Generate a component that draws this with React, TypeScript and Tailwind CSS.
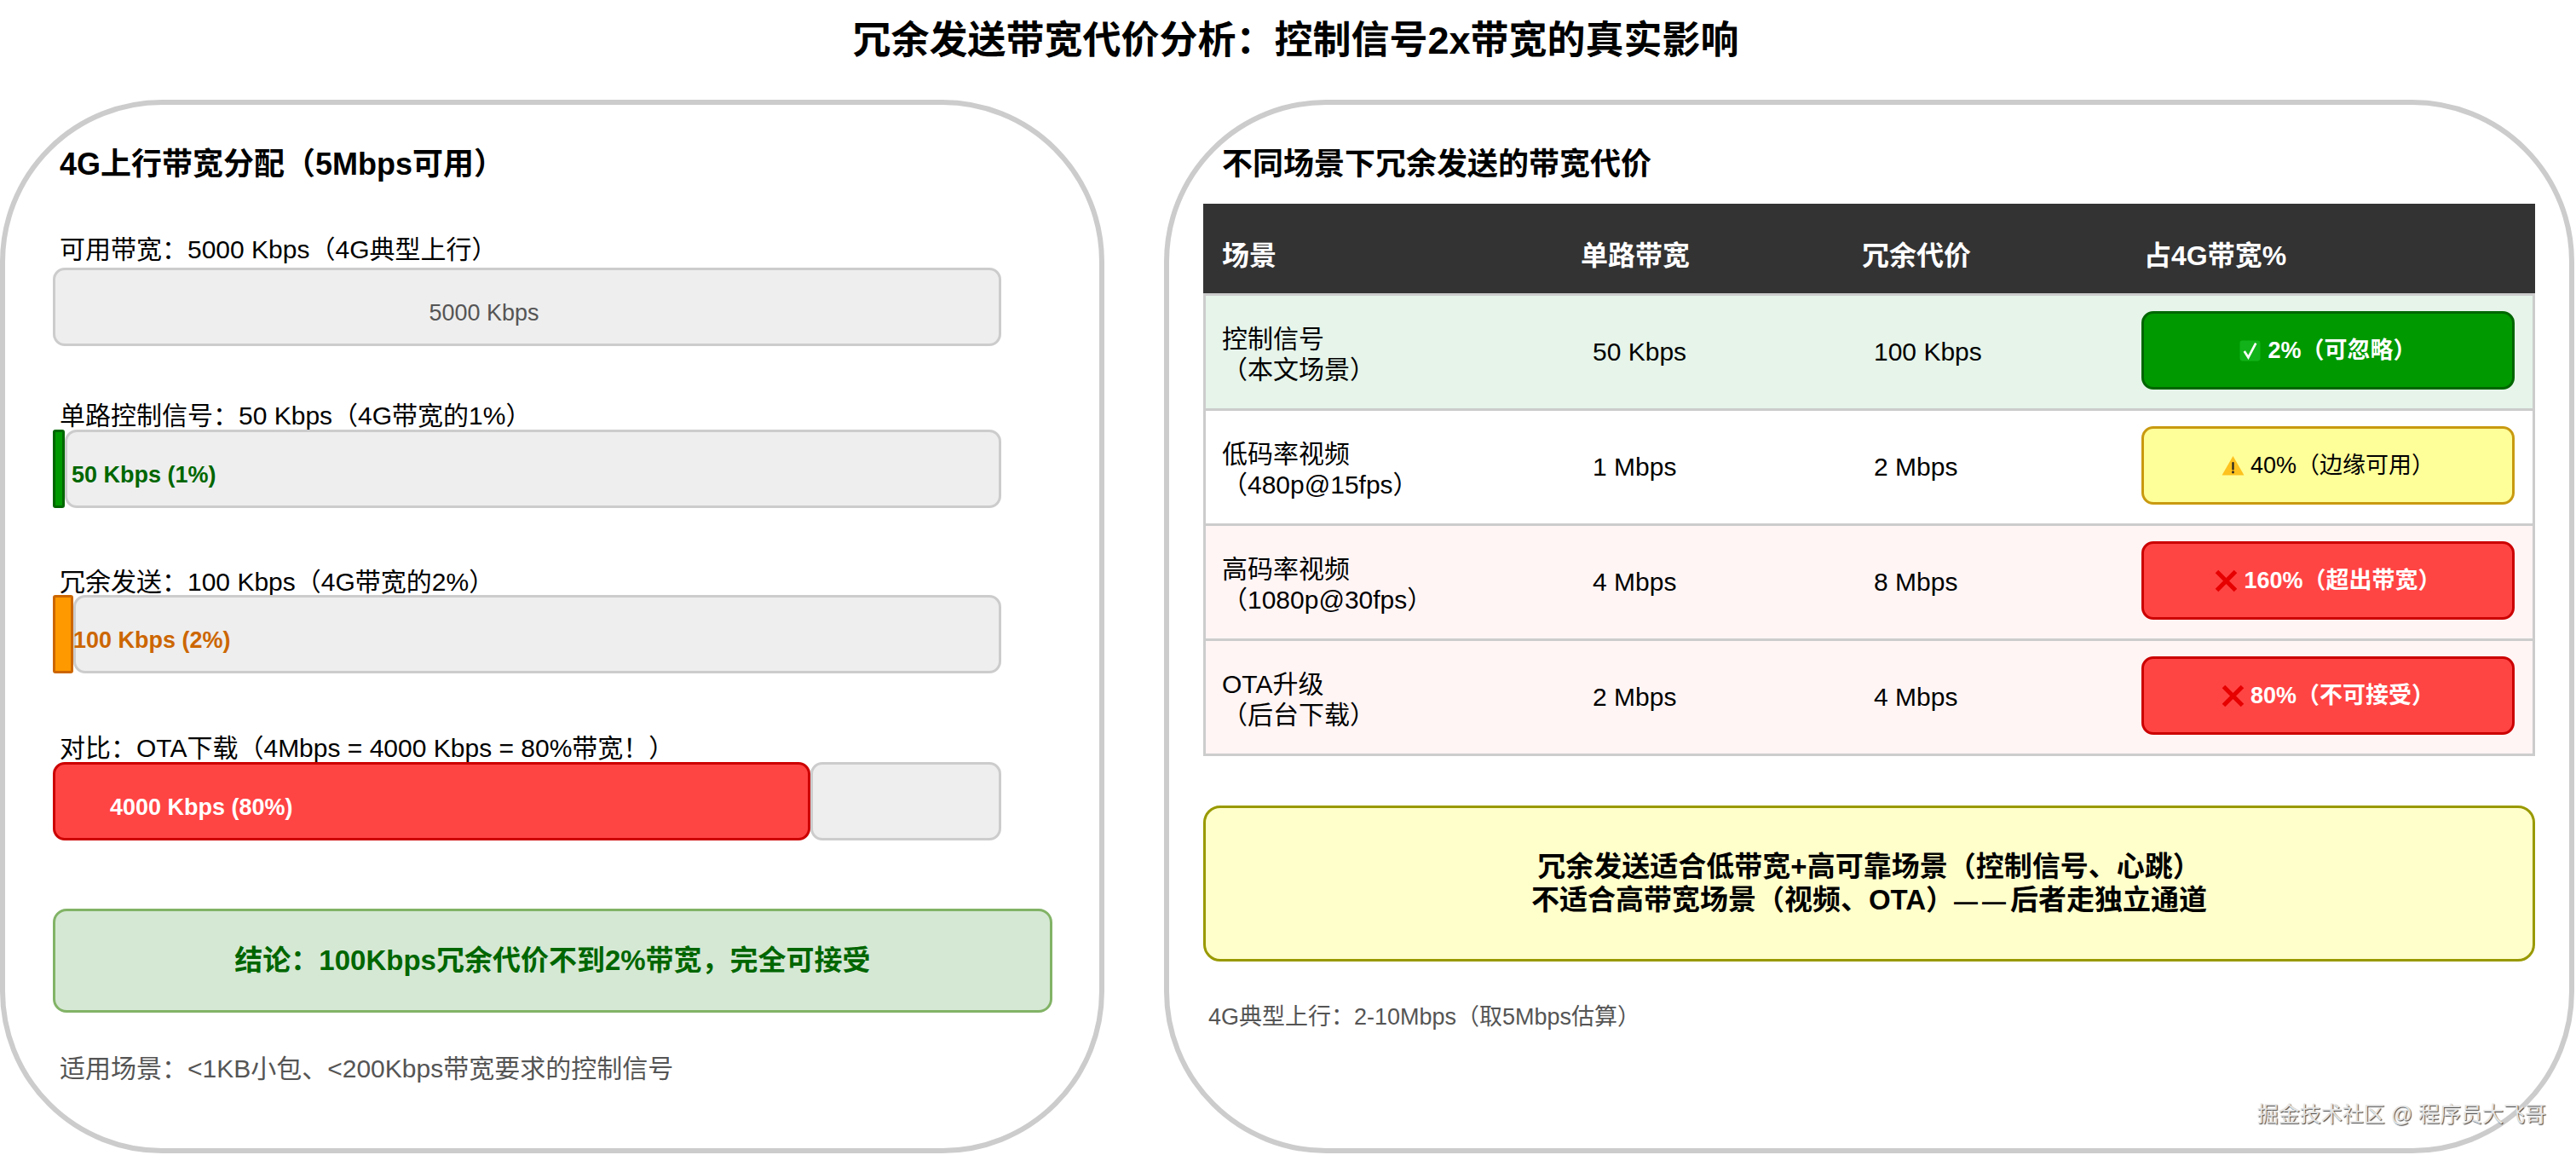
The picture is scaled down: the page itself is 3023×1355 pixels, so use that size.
import type { ReactNode } from "react";

const font = "font-['Liberation_Sans','Noto_Sans_CJK_SC',sans-serif]";
const rowCols = "grid grid-cols-[440px_330px_331px_1fr]";

function CheckIcon() {
  return (
    <svg width="25" height="25" viewBox="0 0 24 24" className="shrink-0">
      <rect x="0.5" y="0.5" width="23" height="23" rx="3" fill="#12b31a" />
      <path d="M5.5 12.5 L10 19.5 L18.5 3.5" fill="none" stroke="#fff" strokeWidth="2.6" />
    </svg>
  );
}

function WarnIcon() {
  return (
    <svg width="27" height="24" viewBox="0 0 27 24" className="shrink-0">
      <path d="M13.5 1 L26.5 23.5 L0.5 23.5 Z" fill="#fdc21f" />
      <rect x="12.4" y="8" width="2.2" height="9.5" rx="1" fill="#222" />
      <circle cx="13.5" cy="20" r="1.4" fill="#222" />
    </svg>
  );
}

function CrossIcon() {
  return (
    <svg width="27" height="27" viewBox="0 0 27 27" className="shrink-0">
      <path d="M2.5 2.5 L24.5 24.5 M24.5 2.5 L2.5 24.5" fill="none" stroke="#e60000" strokeWidth="5" />
    </svg>
  );
}

function Bar({ fill, children }: { fill?: ReactNode; children?: ReactNode }) {
  return (
    <div className="flex h-[92px] w-[1113px]">
      {fill}
      <div className="flex-1 flex items-center pt-[14px] rounded-[14px] border-[3px] border-[#ccc] bg-[#eee] text-[27px] leading-[32px]">
        {children}
      </div>
    </div>
  );
}

function Label({ children }: { children: ReactNode }) {
  return <div className="pl-[8px] pt-[1px] text-[30px] leading-[31px] text-black">{children}</div>;
}

const rows = [
  {
    name: "控制信号",
    sub: "（本文场景）",
    single: "50 Kbps",
    cost: "100 Kbps",
    tone: "bg-[#e6f4ea]",
    badge: "bg-[#009900] border-[#006600] text-white font-bold",
    icon: <CheckIcon />,
    text: "2%（可忽略）",
    gap: "gap-[8px]",
  },
  {
    name: "低码率视频",
    sub: "（480p@15fps）",
    single: "1 Mbps",
    cost: "2 Mbps",
    tone: "bg-white",
    badge: "bg-[#ffff99] border-[#c99a10] text-black",
    icon: <WarnIcon />,
    text: "40%（边缘可用）",
    gap: "gap-[7px]",
  },
  {
    name: "高码率视频",
    sub: "（1080p@30fps）",
    single: "4 Mbps",
    cost: "8 Mbps",
    tone: "bg-[#fff5f5]",
    badge: "bg-[#ff4444] border-[#cc0000] text-white font-bold",
    icon: <CrossIcon />,
    text: "160%（超出带宽）",
    gap: "gap-[7px]",
  },
  {
    name: "OTA升级",
    sub: "（后台下载）",
    single: "2 Mbps",
    cost: "4 Mbps",
    tone: "bg-[#fff5f5]",
    badge: "bg-[#ff4444] border-[#cc0000] text-white font-bold",
    icon: <CrossIcon />,
    text: "80%（不可接受）",
    gap: "gap-[7px]",
  },
];

export default function App() {
  return (
    <div className={`${font} relative w-[3023px] h-[1355px] bg-white text-black overflow-hidden`}>
      <h1 className="h-[117px] pt-[21px] pl-[18px] text-center text-[45px] leading-[54px] font-bold">
        冗余发送带宽代价分析：控制信号2x带宽的真实影响
      </h1>

      <div className="flex gap-[70px] pr-[2px]">
        {/* left panel */}
        <section className="w-[1296px] h-[1236px] shrink-0 rounded-[190px] border-[6px] border-[#ccc] pt-[50px] pl-[56px]">
          <h2 className="pl-[8px] text-[36px] leading-[40px] font-bold">4G上行带宽分配（5Mbps可用）</h2>

          <div className="mt-[63px]">
            <Label>可用带宽：5000 Kbps（4G典型上行）</Label>
            <div className="mt-[6px]">
              <Bar>
                <span className="w-full text-center pr-[101px] text-[#555]">5000 Kbps</span>
              </Bar>
            </div>
          </div>

          <div className="mt-[65px]">
            <Label>单路控制信号：50 Kbps（4G带宽的1%）</Label>
            <div className="mt-[1px]">
              <Bar fill={<div className="w-[14px] rounded-[3px] border-[3px] border-[#006600] bg-[#009900]" />}>
                <span className="pl-[5px] font-bold text-[#006600]">50 Kbps (1%)</span>
              </Bar>
            </div>
          </div>

          <div className="mt-[70px]">
            <Label>冗余发送：100 Kbps（4G带宽的2%）</Label>
            <Bar fill={<div className="w-[24px] rounded-[3px] border-[3px] border-[#cc6600] bg-[#ff9900]" />}>
              <span className="-ml-[3px] font-bold text-[#cc6600]">100 Kbps (2%)</span>
            </Bar>
          </div>

          <div className="mt-[71px]">
            <Label>对比：OTA下载（4Mbps = 4000 Kbps = 80%带宽！）</Label>
            <div className="mt-[1px]">
              <Bar
                fill={
                  <div className="w-[889px] flex items-center pt-[14px] pl-[64px] rounded-[14px] border-[3px] border-[#cc0000] bg-[#ff4444] text-[27px] leading-[32px] font-bold text-white">
                    4000 Kbps (80%)
                  </div>
                }
              />
            </div>
          </div>

          <div className="mt-[80px] w-[1173px] h-[122px] flex items-center justify-center rounded-[16px] border-[3px] border-[#82b366] bg-[#d5e8d4] text-[33px] font-bold text-[#006600]">
            结论：100Kbps冗余代价不到2%带宽，完全可接受
          </div>

          <div className="mt-[48px] pl-[8px] text-[30px] leading-[36px] text-[#555]">
            适用场景：&lt;1KB小包、&lt;200Kbps带宽要求的控制信号
          </div>
        </section>

        {/* right panel */}
        <section className="flex-1 h-[1236px] rounded-[190px] border-[6px] border-[#ccc] pt-[50px] pl-[40px] pr-[40px]">
          <h2 className="pl-[22px] text-[36px] leading-[40px] font-bold">不同场景下冗余发送的带宽代价</h2>

          <div className="mt-[26px]">
            <div className={`${rowCols} h-[105px] pt-[17px] items-center border-x-[3px] border-[#333] bg-[#333] text-[32px] font-bold text-white`}>
              <div className="pl-[19px]">场景</div>
              <div>单路带宽</div>
              <div>冗余代价</div>
              <div>占4G带宽%</div>
            </div>

            {rows.map((row, i) => (
              <div
                key={row.name}
                className={`${rowCols} ${row.tone} ${i === 0 ? "h-[138px] border-t-[3px]" : "h-[135px]"} items-center border-x-[3px] border-b-[3px] border-[#ccc] text-[30px] leading-[36px]`}
              >
                <div className="pl-[19px] pt-[6px]">
                  <div>{row.name}</div>
                  <div>{row.sub}</div>
                </div>
                <div className="pl-[14px]">{row.single}</div>
                <div className="pl-[14px]">{row.cost}</div>
                <div className="pr-[21px] pb-[4px] -ml-[3px]">
                  <div className={`h-[92px] flex items-center justify-center ${row.gap} rounded-[14px] border-[3px] text-[27px] ${row.badge}`}>
                    {row.icon}
                    <span>{row.text}</span>
                  </div>
                </div>
              </div>
            ))}
          </div>

          <div className="mt-[58px] h-[183px] flex flex-col justify-center items-center rounded-[20px] border-[3px] border-[#999900] bg-[#ffffcc] text-[33px] leading-[39px] font-bold">
            <div>冗余发送适合低带宽+高可靠场景（控制信号、心跳）</div>
            <div>
              不适合高带宽场景（视频、OTA）<span className="text-[28px] tracking-[5px]">——</span>后者走独立通道
            </div>
          </div>

          <div className="mt-[47px] ml-[6px] text-[27px] leading-[36px] text-[#555]">
            4G典型上行：2-10Mbps（取5Mbps估算）
          </div>
        </section>
      </div>

      <div className="absolute right-[35px] top-[1292px] text-[25px] leading-[30px] text-[#e4e4e4] [text-shadow:1px_1px_1px_#444]">
        掘金技术社区 @ 程序员大飞哥
      </div>
    </div>
  );
}
